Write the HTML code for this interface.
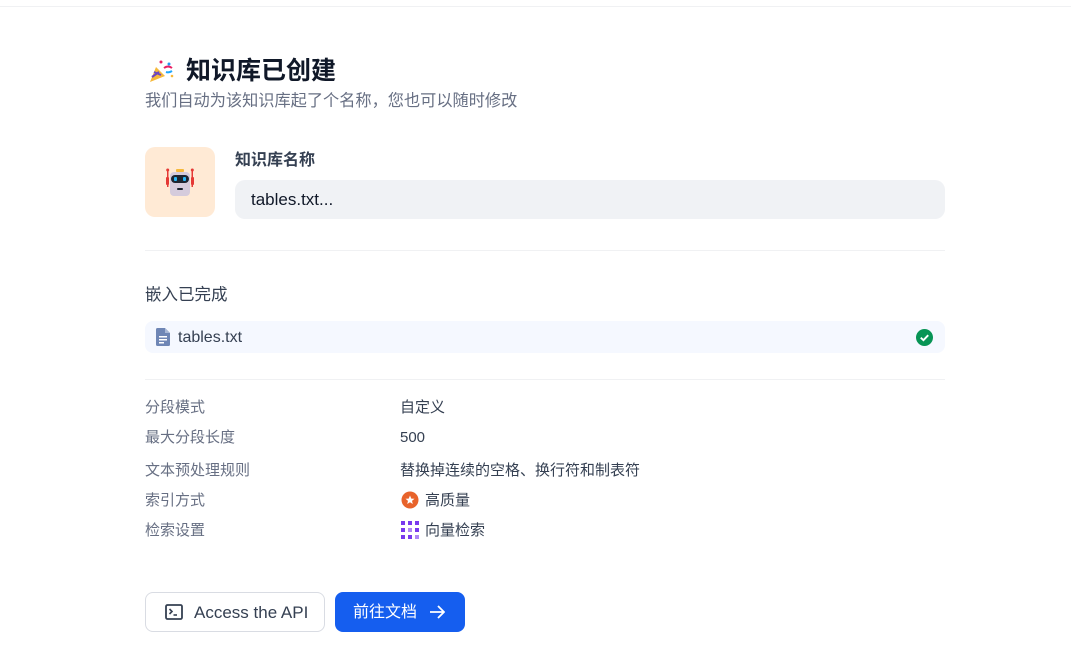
<!DOCTYPE html>
<html><head><meta charset="utf-8"><style>
*{margin:0;padding:0;box-sizing:border-box}
body{width:1071px;height:664px;background:#fff;font-family:"Liberation Sans","Noto Sans CJK SC",sans-serif;position:relative;overflow:hidden;color:#1f2937}
.topline{position:absolute;left:0;right:0;top:6px;height:1px;background:#f0f1f3}
.abs{position:absolute}
h1{position:absolute;left:186px;top:54px;font-size:25px;font-weight:700;color:#101828;line-height:34px}
.sub{left:145px;top:91px;font-size:16.2px;color:#676f83;line-height:20px;white-space:nowrap}
.avatar{left:145px;top:147px;width:70px;height:70px;border-radius:10px;background:#ffead5}
.lbl{left:235px;top:150px;font-size:16px;font-weight:700;color:#354052;line-height:22px}
.inp{left:235px;top:180px;width:710px;height:39px;border-radius:10px;background:#f0f2f5;font-size:17px;color:#101828;padding-left:16px;line-height:39px}
.hr{left:145px;width:800px;height:1px;background:#f0f1f3}
.emb{left:145px;top:284px;font-size:16.5px;color:#354052;line-height:22px}
.file{left:145px;top:321px;width:800px;height:32px;border-radius:8px;background:#f5f8ff}
.file span{position:absolute;left:33px;top:1px;line-height:32px;font-size:16px;color:#354052}
.row{left:145px;font-size:15px;color:#676f83;line-height:20px}
.val{left:400px;font-size:15px;color:#354052;line-height:20px}
.btn1{left:145px;top:592px;width:180px;height:40px;border:1px solid #d9dce3;border-radius:8px;background:#fff;font-size:17px;color:#354052}
.btn2{left:335px;top:592px;width:130px;height:40px;border-radius:8px;background:#155eef;color:#fff;font-size:16px}
</style></head><body>
<div class="topline"></div>
<svg class="abs" style="left:147px;top:58px" width="28" height="26" viewBox="0 0 28 26">
<path d="M3 24 L9 9 L18 18 Z" fill="#f6b93b"/><path d="M5 19 L12 14 M7 14 L14 17" stroke="#6b46c1" stroke-width="2"/>
<circle cx="14" cy="4" r="1.5" fill="#e91e63"/><circle cx="22" cy="6" r="1.5" fill="#2196f3"/><path d="M17 10 q4 -3 8 0" stroke="#e91e63" stroke-width="2" fill="none"/><path d="M19 14 q3 1 6 -1" stroke="#1ea7fd" stroke-width="2" fill="none"/><circle cx="25" cy="18" r="1.3" fill="#f6b93b"/>
</svg>
<h1>知识库已创建</h1>
<div class="abs sub">我们自动为该知识库起了个名称，您也可以随时修改</div>
<div class="abs avatar">
<svg class="abs" style="left:19px;top:20px" width="32" height="32" viewBox="0 0 32 32">
<rect x="12" y="2" width="8" height="3" rx="1" fill="#f6b93b"/>
<rect x="3" y="3" width="1.5" height="17" fill="#e53935"/><rect x="27.5" y="3" width="1.5" height="17" fill="#e53935"/>
<circle cx="3.7" cy="3" r="1.5" fill="#e53935"/><circle cx="28.3" cy="3" r="1.5" fill="#e53935"/>
<rect x="2" y="10" width="3" height="8" rx="1" fill="#e53935"/><rect x="27" y="10" width="3" height="8" rx="1" fill="#e53935"/>
<rect x="6" y="5" width="20" height="24" rx="4" fill="#d5cbdc"/>
<rect x="7" y="8" width="18" height="8" rx="4" fill="#1d2430"/>
<rect x="10" y="10" width="3" height="4" rx="1" fill="#29b6f6"/><rect x="19" y="10" width="3" height="4" rx="1" fill="#29b6f6"/>
<rect x="13" y="21" width="6" height="2" rx="1" fill="#1d2430"/>
</svg></div>
<div class="abs lbl">知识库名称</div>
<div class="abs inp">tables.txt...</div>
<div class="abs hr" style="top:250px"></div>
<div class="abs emb">嵌入已完成</div>
<div class="abs file">
<svg class="abs" style="left:10px;top:7px" width="16" height="18" viewBox="0 0 16 18"><path d="M1 1.5 Q1 0 2.5 0 H10 L15 5 V16.5 Q15 18 13.5 18 H2.5 Q1 18 1 16.5Z" fill="#6f86b5"/><path d="M10 0 V5 H15" fill="#a9b8d6"/><rect x="4" y="8" width="8" height="1.5" fill="#fff"/><rect x="4" y="11" width="8" height="1.5" fill="#fff"/><rect x="4" y="14" width="5" height="1.5" fill="#fff"/></svg>
<span>tables.txt</span>
<svg class="abs" style="left:771px;top:8px" width="17" height="17" viewBox="0 0 16 16"><circle cx="8" cy="8" r="8" fill="#079455"/><path d="M4.5 8.2 L7 10.5 L11.5 5.8" stroke="#fff" stroke-width="1.8" fill="none"/></svg>
</div>
<div class="abs hr" style="top:379px"></div>
<div class="abs row" style="top:398px">分段模式</div><div class="abs val" style="top:398px">自定义</div>
<div class="abs row" style="top:428px">最大分段长度</div><div class="abs val" style="top:428px">500</div>
<div class="abs row" style="top:461px">文本预处理规则</div><div class="abs val" style="top:461px">替换掉连续的空格、换行符和制表符</div>
<div class="abs row" style="top:491px">索引方式</div>
<svg class="abs" style="left:401px;top:491px" width="18" height="18" viewBox="0 0 18 18"><circle cx="9" cy="9" r="8.5" fill="#e8632b"/><path d="M9 4.5 L10.3 7.6 L13.5 7.8 L11 9.9 L11.8 13 L9 11.3 L6.2 13 L7 9.9 L4.5 7.8 L7.7 7.6Z" fill="#fff"/></svg>
<div class="abs val" style="top:491px;left:425px">高质量</div>
<div class="abs row" style="top:521px">检索设置</div>
<svg class="abs" style="left:401px;top:521px" width="18" height="18" viewBox="0 0 18 18" fill="#7839ee"><rect x="0" y="0" width="4" height="4"/><rect x="7" y="0" width="4" height="4"/><rect x="14" y="0" width="4" height="4"/><rect x="0" y="7" width="4" height="4"/><rect x="7" y="7" width="4" height="4" opacity=".6"/><rect x="14" y="7" width="4" height="4"/><rect x="0" y="14" width="4" height="4"/><rect x="7" y="14" width="4" height="4"/><rect x="14" y="14" width="4" height="4" opacity=".6"/></svg>
<div class="abs val" style="top:521px;left:425px">向量检索</div>
<div class="abs btn1">
<svg class="abs" style="left:19px;top:11px" width="18" height="16" viewBox="0 0 18 16"><rect x="1" y="1" width="16" height="14" rx="1.5" fill="none" stroke="#354052" stroke-width="1.8"/><path d="M4.5 5 L7 7.5 L4.5 10" stroke="#354052" stroke-width="1.6" fill="none"/><path d="M8.5 11 H12" stroke="#354052" stroke-width="1.6"/></svg>
<span class="abs" style="left:48px;top:1px;line-height:38px">Access the API</span></div>
<div class="abs btn2"><span class="abs" style="left:18px;top:1px;line-height:40px">前往文档</span>
<svg class="abs" style="left:94px;top:12px" width="16" height="16" viewBox="0 0 16 16"><path d="M1 8 H15 M9 2 L15 8 L9 14" stroke="#fff" stroke-width="1.8" fill="none"/></svg></div>
</body></html>
